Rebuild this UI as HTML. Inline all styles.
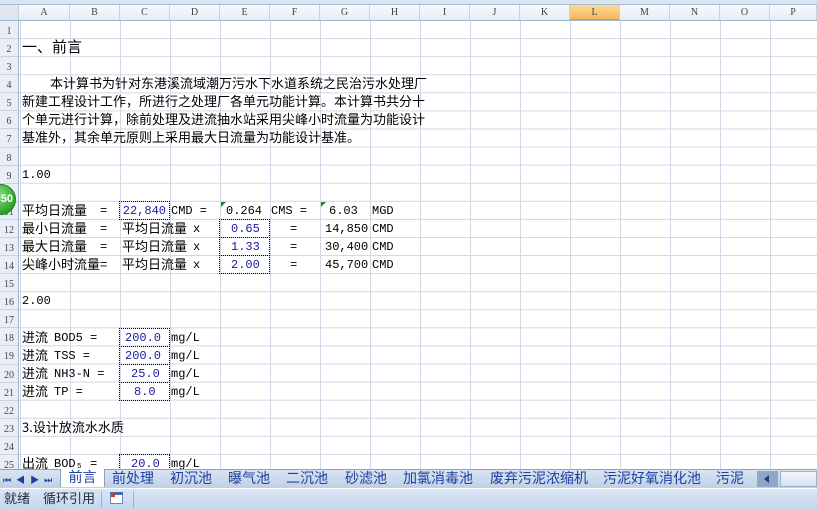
<!DOCTYPE html>
<html><head><meta charset="utf-8"><style>
*{margin:0;padding:0;box-sizing:border-box}
body{width:817px;height:509px;overflow:hidden;background:#fff;position:relative;font-family:"Liberation Mono","Noto Sans CJK SC",monospace;font-size:12px;color:#000}
#topstrip{position:absolute;left:0;top:0;width:817px;height:5px;background:#dbe5f1;border-bottom:1px solid #a6bbd6}
#colhdr{position:absolute;left:0;top:5px;width:817px;height:16px;background:linear-gradient(#f8fafd,#e4ecf7);border-bottom:1px solid #9eb6ce}
#colhdr div{position:absolute;top:0;height:15px;width:50px;border-right:1px solid #c5d3e3;text-align:center;font:10px "Liberation Serif",serif;color:#444;line-height:15px}
#grid{position:absolute;left:19px;top:21px;width:798px;height:448px;
background-image:linear-gradient(to right,#d0d7e5 1px,transparent 1px),linear-gradient(to bottom,transparent 17.08px,#d0d7e5 17.08px);
background-size:50px 100%,100% 18.08px;background-position:51px 0,0 0}
#rowhdr{position:absolute;left:0;top:21px;width:19px;height:448px;background:#e9eef6;border-right:1px solid #9eb6ce}
.rn{position:absolute;left:0;width:18px;text-align:center;font:10px "Liberation Serif",serif;color:#444;border-bottom:1px solid #c5d3e3;height:18.08px;line-height:22px}
.t{position:absolute;line-height:18px;height:18px;white-space:pre;font-size:12px}
.c{font-family:"Noto Sans CJK SC","WenQuanYi Zen Hei",sans-serif;font-size:13px;margin-top:-1px}
.b{color:#1a1aa0}
.box{position:absolute;border:1px dotted #000;width:51px;height:19px}
#tabs{position:absolute;left:0;top:469px;width:817px;height:19px;background:linear-gradient(#d9e4f2,#bfd0e6);border-top:1px solid #8aa3c4}
.tab{position:absolute;top:0;height:18px;line-height:17px;font-family:"Noto Sans CJK SC",sans-serif;font-size:14px;color:#1f3fa0}
#status{position:absolute;left:0;top:488px;width:817px;height:21px;background:linear-gradient(#dbe6f4,#c4d6ee);border-top:1px solid #fff}
</style></head><body>
<div id="topstrip"></div>
<div id="colhdr">
<div style="left:0;width:19px;background:#dfe6f0"></div>
<div style="left:19px;width:51px">A</div><div style="left:70px">B</div><div style="left:120px">C</div><div style="left:170px">D</div><div style="left:220px">E</div><div style="left:270px">F</div><div style="left:320px">G</div><div style="left:370px">H</div><div style="left:420px">I</div><div style="left:470px">J</div><div style="left:520px">K</div><div style="left:570px;background:linear-gradient(#fbd99c,#f6b858);border-bottom:1px solid #e09a30">L</div><div style="left:620px">M</div><div style="left:670px">N</div><div style="left:720px">O</div><div style="left:770px;width:47px">P</div>
</div>
<div id="grid"></div>
<div id="rowhdr">
<div class="rn" style="top:0">1</div><div class="rn" style="top:18.08px">2</div><div class="rn" style="top:36.16px">3</div><div class="rn" style="top:54.24px">4</div><div class="rn" style="top:72.32px">5</div><div class="rn" style="top:90.4px">6</div><div class="rn" style="top:108.48px">7</div><div class="rn" style="top:126.56px">8</div><div class="rn" style="top:144.64px">9</div><div class="rn" style="top:162.72px">10</div><div class="rn" style="top:180.8px">11</div><div class="rn" style="top:198.88px">12</div><div class="rn" style="top:216.96px">13</div><div class="rn" style="top:235.04px">14</div><div class="rn" style="top:253.12px">15</div><div class="rn" style="top:271.2px">16</div><div class="rn" style="top:289.28px">17</div><div class="rn" style="top:307.36px">18</div><div class="rn" style="top:325.44px">19</div><div class="rn" style="top:343.52px">20</div><div class="rn" style="top:361.6px">21</div><div class="rn" style="top:379.68px">22</div><div class="rn" style="top:397.76px">23</div><div class="rn" style="top:415.84px">24</div><div class="rn" style="top:433.92px">25</div>
</div>

<div class="t c" style="left:22px;top:39px;font-size:15px">一、前言</div>
<div class="t c" style="left:50px;top:75px">本计算书为针对东港溪流域潮万污水下水道系统之民治污水处理厂</div>
<div class="t c" style="left:22px;top:93px">新建工程设计工作，所进行之处理厂各单元功能计算。本计算书共分十</div>
<div class="t c" style="left:22px;top:111px">个单元进行计算，除前处理及进流抽水站采用尖峰小时流量为功能设计</div>
<div class="t c" style="left:22px;top:129px">基准外，其余单元原则上采用最大日流量为功能设计基准。</div>
<div class="t" style="left:22px;top:166px">1.00</div>

<div class="t c" style="left:22px;top:202px">平均日流量</div><div class="t" style="left:100px;top:202px">=</div>
<div class="box" style="left:119px;top:201px"></div><div class="t b" style="left:120px;top:202px;width:46px;text-align:right">22,840</div>
<div class="t" style="left:171px;top:202px">CMD =</div>
<div class="t" style="left:226px;top:202px">0.264</div><div class="t" style="left:271px;top:202px">CMS =</div>
<div class="t" style="left:329px;top:202px">6.03</div><div class="t" style="left:372px;top:202px">MGD</div>
<div style="position:absolute;left:221px;top:202px;border-top:5px solid #1a8a1a;border-right:5px solid transparent"></div>
<div style="position:absolute;left:321px;top:202px;border-top:5px solid #1a8a1a;border-right:5px solid transparent"></div>

<div class="t c" style="left:22px;top:220px">最小日流量</div><div class="t" style="left:100px;top:220px">=</div><div class="t c" style="left:122px;top:220px">平均日流量</div><div class="t" style="left:193px;top:220px">x</div>
<div class="t c" style="left:22px;top:238px">最大日流量</div><div class="t" style="left:100px;top:238px">=</div><div class="t c" style="left:122px;top:238px">平均日流量</div><div class="t" style="left:193px;top:238px">x</div>
<div class="t c" style="left:22px;top:256px">尖峰小时流量=</div><div class="t c" style="left:122px;top:256px">平均日流量</div><div class="t" style="left:193px;top:256px">x</div>
<div class="box" style="left:219px;top:219px;height:37px;border-bottom:none"></div>
<div class="box" style="left:219px;top:237px"></div><div class="box" style="left:219px;top:255px"></div>
<div class="t b" style="left:231px;top:220px">0.65</div><div class="t b" style="left:231px;top:238px">1.33</div><div class="t b" style="left:231px;top:256px">2.00</div>
<div class="t" style="left:290px;top:220px">=</div><div class="t" style="left:290px;top:238px">=</div><div class="t" style="left:290px;top:256px">=</div>
<div class="t" style="left:325px;top:220px">14,850</div><div class="t" style="left:372px;top:220px">CMD</div>
<div class="t" style="left:325px;top:238px">30,400</div><div class="t" style="left:372px;top:238px">CMD</div>
<div class="t" style="left:325px;top:256px">45,700</div><div class="t" style="left:372px;top:256px">CMD</div>

<div class="t" style="left:22px;top:292px">2.00</div>
<div class="box" style="left:119px;top:328px"></div><div class="box" style="left:119px;top:346px"></div><div class="box" style="left:119px;top:364px"></div><div class="box" style="left:119px;top:382px"></div>
<div class="t c" style="left:22px;top:329px">进流</div><div class="t" style="left:54px;top:329px">BOD5 =</div><div class="t b" style="left:125px;top:329px">200.0</div><div class="t" style="left:171px;top:329px">mg/L</div>
<div class="t c" style="left:22px;top:347px">进流</div><div class="t" style="left:54px;top:347px">TSS =</div><div class="t b" style="left:125px;top:347px">200.0</div><div class="t" style="left:171px;top:347px">mg/L</div>
<div class="t c" style="left:22px;top:365px">进流</div><div class="t" style="left:54px;top:365px">NH3-N =</div><div class="t b" style="left:131px;top:365px">25.0</div><div class="t" style="left:171px;top:365px">mg/L</div>
<div class="t c" style="left:22px;top:383px">进流</div><div class="t" style="left:54px;top:383px">TP =</div><div class="t b" style="left:134px;top:383px">8.0</div><div class="t" style="left:171px;top:383px">mg/L</div>
<div class="t c" style="left:22px;top:419px">3.设计放流水水质</div>
<div class="box" style="left:119px;top:454px;height:16px;border-bottom:none"></div>
<div class="t c" style="left:22px;top:455px">出流</div><div class="t" style="left:54px;top:455px">BOD₅ =</div><div class="t b" style="left:131px;top:455px">20.0</div><div class="t" style="left:171px;top:455px">mg/L</div>

<div style="position:absolute;left:-15px;top:184px;width:31px;height:31px;border-radius:50%;background:radial-gradient(circle at 40% 35%,#8de08a,#2ea52a 70%);border:1px solid #1d7a1a;color:#fff;font:bold 11px 'Liberation Sans',sans-serif;line-height:29px;text-align:right;padding-right:2px">50</div>

<div id="tabs">
<div style="position:absolute;left:3px;top:3px;font-size:9px;color:#1f3fa0;letter-spacing:5px">⏮◀▶⏭</div>
<div class="tab" style="left:60px;width:45px;background:#fff;text-align:center;border-left:1px solid #8aa3c4;border-right:1px solid #8aa3c4;top:-1px">前言</div>
<div class="tab" style="left:112px">前处理</div>
<div class="tab" style="left:170px">初沉池</div>
<div class="tab" style="left:228px">曝气池</div>
<div class="tab" style="left:286px">二沉池</div>
<div class="tab" style="left:345px">砂滤池</div>
<div class="tab" style="left:403px">加氯消毒池</div>
<div class="tab" style="left:490px">废弃污泥浓缩机</div>
<div class="tab" style="left:603px">污泥好氧消化池</div>
<div class="tab" style="left:716px;width:40px;overflow:hidden">污泥脱</div>
<div style="position:absolute;left:757px;top:1px;width:21px;height:16px;background:#8ea6c8"></div>
<div style="position:absolute;left:764px;top:5px;border-right:5px solid #2a3f66;border-top:4px solid transparent;border-bottom:4px solid transparent"></div>
<div style="position:absolute;left:780px;top:1px;width:37px;height:16px;background:linear-gradient(#f3f6fb,#d6e0ee);border:1px solid #9ab0cf"></div>
</div>
<div id="status">
<div style="position:absolute;left:4px;top:-1px;font:13px 'Noto Sans CJK SC',sans-serif;color:#1e2a40">就绪</div>
<div style="position:absolute;left:43px;top:-1px;font:13px 'Noto Sans CJK SC',sans-serif;color:#1e2a40">循环引用</div>
<div style="position:absolute;left:101px;top:2px;width:1px;height:17px;background:#9ab0cf"></div>
<div style="position:absolute;left:110px;top:3px;width:13px;height:12px;background:#fff;border:1px solid #6a8ab0;border-top:3px solid #3b6fb0"></div>
<div style="position:absolute;left:111px;top:4px;width:4px;height:4px;background:#d63a2a"></div>
<div style="position:absolute;left:133px;top:2px;width:1px;height:17px;background:#9ab0cf"></div>
</div>
</body></html>
